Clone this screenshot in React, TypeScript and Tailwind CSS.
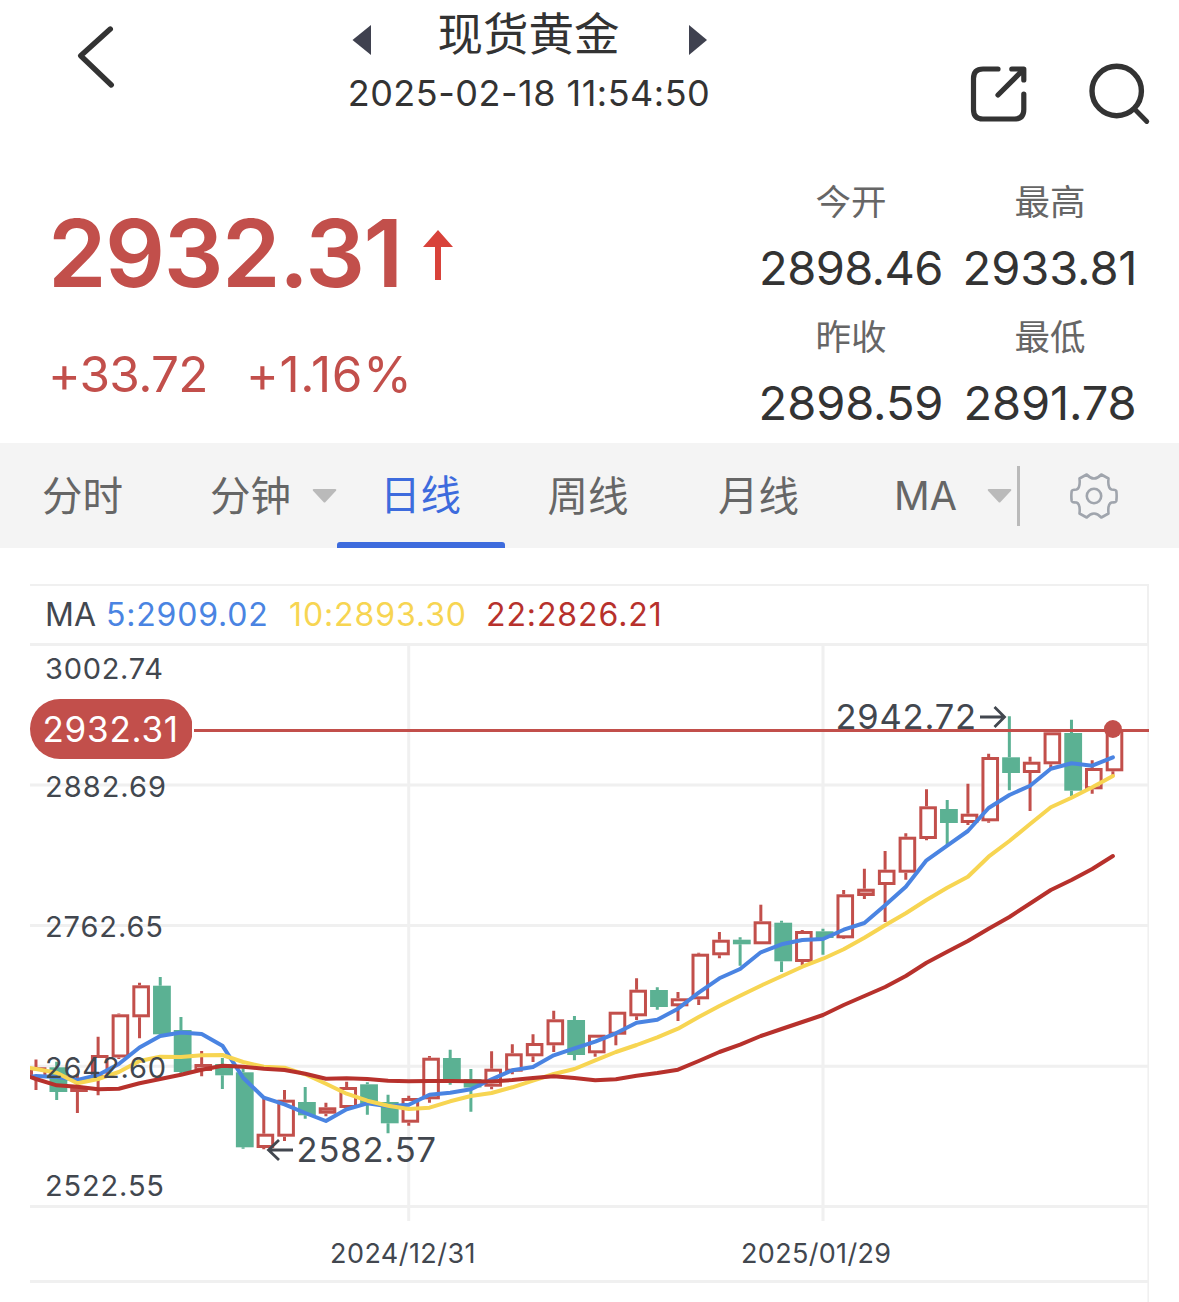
import React from "react";

type Candle = [up: 0 | 1, top: number, bottom: number, high: number, low: number];

const candles: Candle[] = [
  [1, 1067.3, 1078, 1059.5, 1090], [0, 1067.3, 1092, 1061.7, 1100], [1, 1086, 1092, 1074, 1113],
  [1, 1055, 1078, 1036.7, 1095.3], [1, 1014.3, 1057.5, 1013.5, 1059], [1, 985.3, 1017.3, 982.7, 1038.3],
  [0, 985.7, 1034.3, 977, 1035], [0, 1030, 1072, 1017, 1074], [1, 1064, 1071, 1051, 1076.3],
  [0, 1064, 1075.3, 1058, 1089], [0, 1072.3, 1147.3, 1068.3, 1148.7], [1, 1133.7, 1148, 1098, 1149.3],
  [1, 1099.7, 1136.7, 1090, 1141], [0, 1102, 1115.3, 1087, 1118.7], [1, 1107.3, 1113.7, 1102.7, 1116.3],
  [1, 1087, 1108, 1081.7, 1109], [0, 1084.3, 1104, 1082.3, 1114.7], [0, 1102, 1123.3, 1094.7, 1133.3],
  [1, 1098, 1122.7, 1095.7, 1125.7], [1, 1057.7, 1099.3, 1056, 1102.7], [0, 1058, 1081, 1049.7, 1084.7],
  [0, 1079, 1087.5, 1069, 1111.7], [1, 1068.7, 1086.7, 1051.3, 1089.3], [1, 1053.3, 1071.7, 1044.3, 1074.3],
  [1, 1043, 1056.3, 1034.3, 1062], [1, 1019.3, 1045.3, 1010.7, 1052], [0, 1020, 1055, 1016, 1060.3],
  [1, 1034.7, 1053.3, 1034.7, 1056.7], [1, 1011.7, 1034.7, 1011.7, 1045.3], [1, 989.7, 1016.3, 978.3, 1020],
  [0, 990, 1007, 987.3, 1009.7], [1, 998.3, 1006.3, 992, 1021], [1, 953.7, 999.3, 952.7, 1005],
  [1, 939.7, 955.3, 932, 958.3], [0, 939.7, 944.3, 937.3, 965.7], [1, 921.3, 944.3, 904.7, 944.3],
  [0, 922.7, 961.3, 920.7, 972], [1, 931, 962, 930, 965], [0, 931.3, 938, 928.7, 954.7],
  [1, 894.3, 938.3, 890, 939], [1, 888.7, 896, 868.7, 899], [1, 869.7, 885, 851, 922],
  [1, 836.7, 872.7, 833.3, 879.7], [1, 806.3, 839, 789.3, 840.3], [0, 809, 823, 800, 845],
  [1, 813.7, 823, 783.7, 825], [1, 757, 821.3, 753.7, 822.7], [0, 757.3, 773, 716.3, 790.3],
  [1, 761.7, 773, 756.7, 811], [1, 732.3, 764.3, 732.3, 768], [0, 733, 790.7, 719.7, 796],
  [1, 768, 789.3, 760.3, 793.7], [1, 730, 771.3, 730, 776],
];

const ma5 = [
  1076, 1077, 1080, 1075, 1064, 1047.5, 1036, 1032.5, 1034, 1045.7, 1077.7, 1097.7, 1104.3, 1113, 1121, 1109.3,
  1103.3, 1106.3, 1104.7, 1094.7, 1092.7, 1089.3, 1079.3, 1070.3, 1067, 1055.3, 1048.3, 1041.7, 1033.3, 1022.7,
  1019.7, 1008.7, 992.7, 978.3, 969, 952.3, 944.3, 940, 939, 929.7, 923, 905.3, 886.7, 860.3, 845.7, 831, 808, 795,
  785.7, 768.7, 763.3, 765.7, 757.3,
];
const ma10 = [
  1069, 1072.7, 1083.3, 1079, 1072, 1061, 1056.7, 1057, 1055.3, 1055, 1062, 1066.7, 1067.7, 1074.3, 1083.7, 1093.7,
  1100.7, 1105.7, 1109, 1107.7, 1101.3, 1096, 1093, 1087.3, 1080.7, 1074, 1069, 1060.3, 1052, 1045, 1037.3, 1028.7,
  1017, 1006, 995.7, 985.7, 976.3, 966.7, 958.7, 949.3, 937.7, 925.3, 913.3, 900, 887.7, 876.7, 856.7, 841, 824,
  807.3, 797.7, 787.3, 776,
];
const ma22 = [
  1079, 1085.3, 1086.7, 1089.3, 1088.7, 1083.3, 1079, 1074.7, 1069.7, 1065.7, 1066.7, 1068.7, 1070, 1073.7, 1078.7,
  1078.3, 1079, 1080.7, 1081.3, 1081, 1081, 1081.3, 1081.5, 1080, 1078, 1076.3, 1078, 1080.3, 1079.3, 1075.7, 1073,
  1069.7, 1061, 1052, 1044.7, 1036, 1029, 1022, 1015, 1005, 996, 987, 976, 962.7, 951.7, 941, 928.7, 917, 903.5, 890,
  880, 869, 856,
];

const STEP = 20.71;
const xAt = (i: number) => 1112.9 - (52 - i) * STEP;
const line = (start: number, ys: number[]) =>
  `30,${start} ` + ys.map((y, i) => `${xAt(i).toFixed(1)},${y}`).join(" ");

const priceLabels = [
  { t: "3002.74", y: 678.7, w: 118 },
  { t: "2882.69", y: 796.7, w: 121 },
  { t: "2762.65", y: 937.3, w: 118 },
  { t: "2642.60", y: 1077.7, w: 121 },
  { t: "2522.55", y: 1195.7, w: 119 },
];

function Chart() {
  return (
    <svg className="block h-[659px] w-[1120px]" viewBox="30 643 1120 659" fontFamily="Inter, sans-serif">
      <g stroke="#f0f0f0" strokeWidth="3">
        <path d="M30 644.5H1149M30 785H1149M30 925.5H1149M30 1066.3H1149M30 1206.5H1149M30 1281.5H1149" />
        <path d="M408.7 645V1221M823 645V1221" />
        <path d="M1148.2 643V1302" strokeWidth="1.6" />
      </g>
      {candles.map(([up, top, bottom, high, low], i) => {
        const x = xAt(i);
        const left = Math.max(x - 7.2, 30);
        const color = up ? "#c24f4b" : "#5bb193";
        return (
          <g key={i} stroke={color} strokeWidth="3">
            <path d={`M${x} ${high}V${top}M${x} ${bottom}V${low}`} />
            {up ? (
              <rect
                x={left + 1.5}
                y={top + 1.5}
                width={x + 10.4 - left - 3}
                height={Math.max(bottom - top - 3, 0.5)}
                fill={bottom - top < 8 ? "#dfa09e" : "#fff"}
              />
            ) : (
              <rect x={left} y={top} width={x + 10.6 - left} height={bottom - top} fill={color} stroke="none" />
            )}
          </g>
        );
      })}
      <g fill="none" strokeWidth="4" strokeLinejoin="round" strokeLinecap="round">
        <polyline points={line(1077, ma5)} stroke="#4a84e2" />
        <polyline points={line(1068, ma10)} stroke="#f7d552" />
        <polyline points={line(1077, ma22)} stroke="#b7312c" />
      </g>
      <g fill="#42474f" fontSize="29">
        {priceLabels.map((p) => (
          <text key={p.t} x="45" y={p.y} textLength={p.w}>{p.t}</text>
        ))}
      </g>
      <g fill="#42474f" fontSize="34.5">
        <text x="835.5" y="729.3" textLength="140.5">2942.72</text>
        <text x="296.5" y="1162.3" textLength="139.5">2582.57</text>
      </g>
      <g fill="none" stroke="#42474f" strokeWidth="2.8">
        <path d="M980 717H1004.5M994.5 707L1004.5 717L994.5 727" />
        <path d="M293 1150H268.5M279 1140L268.5 1150L279 1160" />
      </g>
      <g fill="#42474f" fontSize="27">
        <text x="330" y="1263" textLength="145.5">2024/12/31</text>
        <text x="741" y="1263" textLength="150">2025/01/29</text>
      </g>
      <path d="M194 730.4H1149" stroke="#c24f4b" strokeWidth="3" />
      <circle cx="1112.9" cy="729" r="9" fill="#c24f4b" />
      <clipPath id="badge-edge">
        <rect x="30" y="699" width="162" height="60" />
      </clipPath>
      <rect x="30" y="699" width="163" height="60" rx="30" fill="#c24f4b" clipPath="url(#badge-edge)" />
      <text x="42.500" y="741.7" fontSize="35" textLength="135.5" fill="#fff">2932.31</text>
    </svg>
  );
}

function Caret() {
  return (
    <svg className="block h-[14px] w-[25px] shrink-0" viewBox="0 0 25 14">
      <path d="M1.5 0H23.5Q25 .4 24 1.8L13.5 13Q12.5 14 11.5 13L1 1.8Q0 .4 1.5 0Z" fill="#bababa" />
    </svg>
  );
}

function Header() {
  return (
    <header className="flex h-[160px] items-start text-[#333333]">
      <svg className="mt-[24px] ml-[75px] h-[66px] w-[42px] shrink-0" viewBox="75 24 42 66" fill="none" stroke="#333" strokeWidth="5.4" strokeLinecap="round" strokeLinejoin="round">
        <path d="M110.3 29L80.7 55.7L111.3 85" />
      </svg>
      <div className="ml-[212px] flex w-[400px] flex-col items-center">
        <div className="flex h-[68px] w-full items-start justify-between pr-[22px] pl-[23px]">
          <svg className="mt-[25px] h-[30px] w-[19px]" viewBox="0 0 19 30"><path d="M19 0V30L.5 15Z" fill="#3f414f" /></svg>
          <h1 className="mr-[3px] font-['Noto_Sans_CJK_SC',sans-serif] text-[45.500px] leading-[62px] font-normal whitespace-nowrap">现货黄金</h1>
          <svg className="mt-[25px] h-[30px] w-[18px]" viewBox="0 0 18 30"><path d="M0 0V30L18 15Z" fill="#3f414f" /></svg>
        </div>
        <div className="h-[50px] text-[36px] leading-[50px] tracking-[0.500px] whitespace-nowrap">2025-02-18 11:54:50</div>
      </div>
      <div className="mt-[60px] ml-[238px] flex gap-[57px]">
        <svg className="h-[66px] w-[62px]" viewBox="968 60 62 66" fill="none" stroke="#333" strokeWidth="5.2" strokeLinecap="round" strokeLinejoin="round">
          <path d="M999 69H984Q974.5 69 974.5 78.500V109.500Q974.500 119 984 119H1015.500Q1024.800 119 1024.800 109.500V94" />
          <path d="M1012.800 69H1024.800V80M1024 70L999 95" />
        </svg>
        <svg className="h-[66px] w-[66px]" viewBox="1086 60 66 66" fill="none" stroke="#333" strokeLinecap="round">
          <circle cx="1116.700" cy="91" r="24.700" strokeWidth="5.400" />
          <path d="M1134.500 109L1146.800 121.500" strokeWidth="4.800" />
        </svg>
      </div>
    </header>
  );
}

function Stat({ label, value, tight = false }: { label: string; value: string; tight?: boolean }) {
  return (
    <div className="flex h-[135px] flex-col items-center whitespace-nowrap">
      <div className="h-[52px] font-['Noto_Sans_CJK_SC',sans-serif] text-[35.500px] leading-[52px] text-[#666666]">{label}</div>
      <div className={`mt-[12px] h-[60px] text-[47px] leading-[60px] text-[#333333] ${tight ? "tracking-[-0.600px]" : "tracking-[-0.100px]"}`}>{value}</div>
    </div>
  );
}

function Quote() {
  return (
    <section className="flex h-[283px] justify-between pr-[25px] pl-[48px] text-[#c24f4b]">
      <div className="pt-[38px]">
        <div className="flex h-[110px] items-center">
          <span className="w-[355px] text-[94px] leading-[110px] font-semibold tracking-[-1.500px]">2932.31</span>
          <svg className="mt-[4px] ml-[20px] h-[50px] w-[30px]" viewBox="0 0 30 50"><path d="M15 0L30 17H18V50H12V17H0Z" fill="#d8423a" /></svg>
        </div>
        <div className="mt-[36px] flex h-[60px] text-[49.500px] leading-[60px] whitespace-nowrap">
          <span className="w-[198px] tracking-[-0.700px]">+33.72</span>
          <span className="tracking-[0.700px]">+1.16%</span>
        </div>
      </div>
      <div className="grid w-[398px] grid-cols-[190px_208px] pt-[14px]">
        <Stat label="今开" value="2898.46" tight />
        <Stat label="最高" value="2933.81" />
        <Stat label="昨收" value="2898.59" />
        <Stat label="最低" value="2891.78" />
      </div>
    </section>
  );
}

function Tabs() {
  return (
    <nav className="flex h-[105px] items-center bg-[#f4f4f4] font-[Inter,'Noto_Sans_CJK_SC',sans-serif] text-[40.500px] whitespace-nowrap text-[#666666]">
      <div className="w-[210px] pt-[3px] pl-[42px]">分时</div>
      <div className="flex w-[127px] items-center justify-between">
        <span className="pt-[3px]">分钟</span>
        <Caret />
      </div>
      <div className="flex h-full w-[168px] flex-col items-center text-[#3d6bdd]">
        <span className="flex flex-1 items-center pt-[8px] pr-[1px]">日线</span>
        <span className="h-[6px] w-full rounded-t-[3px] bg-[#3d6bdd]" />
      </div>
      <div className="w-[168px] pt-[3px] pr-[2px] text-center">周线</div>
      <div className="w-[171px] pt-[3px] text-center">月线</div>
      <div className="flex w-[168px] items-center justify-between pl-[50px]">
        <span className="pt-[3px] text-[39.500px]">MA</span>
        <Caret />
      </div>
      <div className="ml-[5px] h-[60px] w-[3px] bg-[#bababa]" />
      <svg className="ml-[49px] h-[48px] w-[50px]" viewBox="-25 -24 50 48" fill="none" stroke="#a0a5ad" strokeWidth="2.600" strokeLinejoin="round">
        <path d="M7.300 -21.500L14.500 -17.500Q13.500 -8 17.500 -6.500Q22 -6.500 22.300 -5Q23 0 22.300 5Q22 6.500 17.500 6.500Q13.500 8 14.500 17.500L7.300 21.500Q0 13.500 -7.300 21.500L-14.500 17.500Q-13.500 8 -17.500 6.500Q-22 6.500 -22.300 5Q-23 0 -22.300 -5Q-22 -6.500 -17.500 -6.500Q-13.500 -8 -14.500 -17.500L-7.300 -21.500Q0 -13.500 7.300 -21.500Z" />
        <circle r="7.200" />
      </svg>
    </nav>
  );
}

export default function App() {
  return (
    <main className="h-[1302px] w-[1179px] overflow-hidden bg-white font-[Inter,'Noto_Sans_CJK_SC',sans-serif]">
      <Header />
      <Quote />
      <Tabs />
      <section className="mt-[36px] ml-[30px] w-[1120px]">
        <div className="flex h-[59px] w-[1119px] items-center border-t-2 border-r-2 border-[#f0f0f0] pl-[15px] text-[32px] tracking-[0.900px] whitespace-nowrap">
          <span className="w-[61px] tracking-normal text-[#42474f]">MA</span>
          <span className="w-[183px] tracking-[0.800px] text-[#4a84e2]">5:2909.02</span>
          <span className="w-[197px] text-[#f7d552]">10:2893.30</span>
          <span className="text-[#b7312c]">22:2826.21</span>
        </div>
        <Chart />
      </section>
    </main>
  );
}
